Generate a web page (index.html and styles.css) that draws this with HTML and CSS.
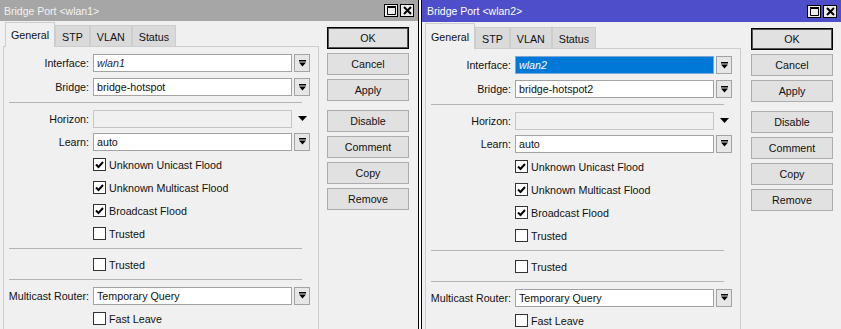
FILE: index.html
```html
<!DOCTYPE html>
<html lang="en">
<head>
  <meta charset="UTF-8" />
  <title>Bridge Port</title>
  <link rel="stylesheet" href="styles.css">
</head>
<body>
  <div class="desk">

    <!-- WINDOW: wlan1 (inactive) -->
    <section class="win win-left">
      <div class="titlebar">
        <span>Bridge Port &lt;wlan1&gt;</span>
        <div class="title-btns">
          <span class="tbtn"><svg width="9" height="9" viewBox="0 0 9 9"><path d="M0.5 1.5h8v7h-8z" fill="none" stroke="#000"/><path d="M0 0.5h9" stroke="#000" stroke-width="2"/></svg></span>
          <span class="tbtn"><svg width="9" height="9" viewBox="0 0 9 9"><path d="M1 1l7 7M8 1l-7 7" stroke="#000" stroke-width="2"/></svg></span>
        </div>
      </div>
      <div class="win-body">
        <div class="tabs-area">
          <div class="tabs">
            <span class="tab active">General</span>
            <span class="tab">STP</span>
            <span class="tab">VLAN</span>
            <span class="tab">Status</span>
          </div>
          <div class="panel">
            <div class="row row-top"><span class="lbl">Interface:</span><span class="field ital">wlan1</span><span class="drop"><svg width="7" height="7" viewBox="0 0 7 7"><path d="M0 0h7v1.5H0zM0 2.5h7L3.5 6.5z"/></svg></span></div>
            <div class="row row-top"><span class="lbl">Bridge:</span><span class="field">bridge-hotspot</span><span class="drop"><svg width="7" height="7" viewBox="0 0 7 7"><path d="M0 0h7v1.5H0zM0 2.5h7L3.5 6.5z"/></svg></span></div>
            <div class="sep"></div>
            <div class="row"><span class="lbl">Horizon:</span><span class="field off"></span><svg class="arrow" width="9" height="5" viewBox="0 0 9 5"><path d="M0 0h9L4.5 5z"/></svg></div>
            <div class="row"><span class="lbl">Learn:</span><span class="field">auto</span><span class="drop"><svg width="7" height="7" viewBox="0 0 7 7"><path d="M0 0h7v1.5H0zM0 2.5h7L3.5 6.5z"/></svg></span></div>
            <div class="row"><span class="lbl"></span><span class="check on"><svg width="11" height="11" viewBox="0 0 11 11"><path d="M2 5.5l2.5 2.5 4.5-5" fill="none" stroke="#000" stroke-width="2"/></svg></span>Unknown Unicast Flood</div>
            <div class="row"><span class="lbl"></span><span class="check on"><svg width="11" height="11" viewBox="0 0 11 11"><path d="M2 5.5l2.5 2.5 4.5-5" fill="none" stroke="#000" stroke-width="2"/></svg></span>Unknown Multicast Flood</div>
            <div class="row"><span class="lbl"></span><span class="check on"><svg width="11" height="11" viewBox="0 0 11 11"><path d="M2 5.5l2.5 2.5 4.5-5" fill="none" stroke="#000" stroke-width="2"/></svg></span>Broadcast Flood</div>
            <div class="row"><span class="lbl"></span><span class="check"></span>Trusted</div>
            <div class="sep"></div>
            <div class="row"><span class="lbl"></span><span class="check"></span>Trusted</div>
            <div class="sep"></div>
            <div class="row"><span class="lbl">Multicast Router:</span><span class="field">Temporary Query</span><span class="drop"><svg width="7" height="7" viewBox="0 0 7 7"><path d="M0 0h7v1.5H0zM0 2.5h7L3.5 6.5z"/></svg></span></div>
            <div class="row"><span class="lbl"></span><span class="check"></span>Fast Leave</div>
          </div>
        </div>
        <div class="btns">
          <span class="btn btn-ok">OK</span>
          <span class="btn">Cancel</span>
          <span class="btn">Apply</span>
          <span class="btn btn-gap">Disable</span>
          <span class="btn">Comment</span>
          <span class="btn">Copy</span>
          <span class="btn">Remove</span>
        </div>
      </div>
    </section>

    <div class="divider"></div>

    <!-- WINDOW: wlan2 (active) -->
    <section class="win win-right">
      <div class="titlebar">
        <span>Bridge Port &lt;wlan2&gt;</span>
        <div class="title-btns">
          <span class="tbtn"><svg width="9" height="9" viewBox="0 0 9 9"><path d="M0.5 1.5h8v7h-8z" fill="none" stroke="#000"/><path d="M0 0.5h9" stroke="#000" stroke-width="2"/></svg></span>
          <span class="tbtn"><svg width="9" height="9" viewBox="0 0 9 9"><path d="M1 1l7 7M8 1l-7 7" stroke="#000" stroke-width="2"/></svg></span>
        </div>
      </div>
      <div class="win-body">
        <div class="tabs-area">
          <div class="tabs">
            <span class="tab active">General</span>
            <span class="tab">STP</span>
            <span class="tab">VLAN</span>
            <span class="tab">Status</span>
          </div>
          <div class="panel">
            <div class="row row-top"><span class="lbl">Interface:</span><span class="field ital sel">wlan2</span><span class="drop"><svg width="7" height="7" viewBox="0 0 7 7"><path d="M0 0h7v1.5H0zM0 2.5h7L3.5 6.5z"/></svg></span></div>
            <div class="row row-top"><span class="lbl">Bridge:</span><span class="field">bridge-hotspot2</span><span class="drop"><svg width="7" height="7" viewBox="0 0 7 7"><path d="M0 0h7v1.5H0zM0 2.5h7L3.5 6.5z"/></svg></span></div>
            <div class="sep"></div>
            <div class="row"><span class="lbl">Horizon:</span><span class="field off"></span><svg class="arrow" width="9" height="5" viewBox="0 0 9 5"><path d="M0 0h9L4.5 5z"/></svg></div>
            <div class="row"><span class="lbl">Learn:</span><span class="field">auto</span><span class="drop"><svg width="7" height="7" viewBox="0 0 7 7"><path d="M0 0h7v1.5H0zM0 2.5h7L3.5 6.5z"/></svg></span></div>
            <div class="row"><span class="lbl"></span><span class="check on"><svg width="11" height="11" viewBox="0 0 11 11"><path d="M2 5.5l2.5 2.5 4.5-5" fill="none" stroke="#000" stroke-width="2"/></svg></span>Unknown Unicast Flood</div>
            <div class="row"><span class="lbl"></span><span class="check on"><svg width="11" height="11" viewBox="0 0 11 11"><path d="M2 5.5l2.5 2.5 4.5-5" fill="none" stroke="#000" stroke-width="2"/></svg></span>Unknown Multicast Flood</div>
            <div class="row"><span class="lbl"></span><span class="check on"><svg width="11" height="11" viewBox="0 0 11 11"><path d="M2 5.5l2.5 2.5 4.5-5" fill="none" stroke="#000" stroke-width="2"/></svg></span>Broadcast Flood</div>
            <div class="row"><span class="lbl"></span><span class="check"></span>Trusted</div>
            <div class="sep"></div>
            <div class="row"><span class="lbl"></span><span class="check"></span>Trusted</div>
            <div class="sep"></div>
            <div class="row"><span class="lbl">Multicast Router:</span><span class="field">Temporary Query</span><span class="drop"><svg width="7" height="7" viewBox="0 0 7 7"><path d="M0 0h7v1.5H0zM0 2.5h7L3.5 6.5z"/></svg></span></div>
            <div class="row"><span class="lbl"></span><span class="check"></span>Fast Leave</div>
          </div>
        </div>
        <div class="btns">
          <span class="btn btn-ok">OK</span>
          <span class="btn">Cancel</span>
          <span class="btn">Apply</span>
          <span class="btn btn-gap">Disable</span>
          <span class="btn">Comment</span>
          <span class="btn">Copy</span>
          <span class="btn">Remove</span>
        </div>
      </div>
    </section>

  </div>
</body>
</html>
```

FILE: styles.css
```css
* {
  box-sizing: border-box;
}
body {
  margin: 0;
  background-color: #f0f0f0;
  font-family: 'Liberation Sans', Arial, sans-serif;
  font-size: 10.7px;
  color: #111;
}
.desk {
  display: flex;
  width: 841px;
  height: 329px;
  overflow: hidden;
}

/* windows */
.win {
  display: flex;
  flex-direction: column;
  background-color: #f0f0f0;
}
.win-left {
  width: 418px;
}
.win-right {
  flex: 1;
}
.divider {
  width: 4px;
  background-color: #fff;
  border-left: 1px solid #000;
  border-right: 1px solid #000;
}

.titlebar {
  flex-shrink: 0;
  height: 21px;
  display: flex;
  align-items: center;
  justify-content: space-between;
  padding: 0 4px 0 4px;
  background-color: #a6a6a6;
  color: #f2f2f2;
  font-size: 10.5px;
}
.win-right .titlebar {
  height: 22px;
  padding-left: 5px;
  background-color: #4e4ecb;
  color: #fff;
}
.title-btns {
  display: flex;
  gap: 2px;
}
.tbtn {
  width: 14px;
  height: 13px;
  border: 1px solid #000;
  background-color: #ececec;
  display: flex;
  align-items: center;
  justify-content: center;
}

.win-body {
  flex: 1;
  display: flex;
  align-items: flex-start;
}

/* tabs */
.tabs-area {
  margin-left: 3px;
  width: 316px;
}
.tabs {
  display: flex;
  align-items: flex-end;
  height: 25px;
  padding-left: 2px;
}
.win-right .tabs {
  height: 26px;
  padding-left: 0;
}
.tab {
  height: 21px;
  padding: 2px 6px 0;
  border: 1px solid #cdcdcd;
  border-bottom: 0;
  background-color: #dadada;
  display: flex;
  align-items: center;
}
.tab.active {
  position: relative;
  z-index: 1;
  height: 25px;
  margin-bottom: -1px;
  padding: 0 5px;
  background-color: #f0f0f0;
}
.win-right .tab.active {
  height: 26px;
}

.panel {
  border: 1px solid #cdcdcd;
  border-bottom: 0;
  padding: 4px 8px 0 0;
  height: 300px;
}

/* form rows */
.row {
  display: flex;
  align-items: center;
  height: 23px;
}
.row-top {
  height: 24px;
}
.lbl {
  flex-shrink: 0;
  width: 86px;
  padding-right: 1px;
  text-align: right;
  white-space: nowrap;
}
.field {
  width: 199px;
  height: 18px;
  margin-left: 3px;
  padding: 0 3px;
  border: 1px solid #a3a3a3;
  background-color: #fff;
  display: flex;
  align-items: center;
  white-space: nowrap;
}
.field.ital {
  font-style: italic;
  color: #1e1e55;
}
.field.sel {
  background-color: #0078d7;
  border-color: #7aa7d6;
  color: #fff;
}
.field.off {
  background-color: #f0f0f0;
  border-color: #c6c6c6;
}
.drop {
  width: 16px;
  height: 18px;
  margin-left: 2px;
  border: 1px solid #a3a3a3;
  background-color: #e6e6e6;
  display: flex;
  align-items: center;
  justify-content: center;
}
.arrow {
  margin-left: 6px;
}
.check {
  width: 13px;
  height: 13px;
  margin: 0 3px 0 3px;
  border: 1px solid #333;
  background-color: #fff;
  display: flex;
  align-items: center;
  justify-content: center;
}
.sep {
  height: 1px;
  margin: 3px 8px 4px 5px;
  background-color: #b4b4b4;
}

/* side buttons */
.btns {
  width: 82px;
  margin: 6px 0 0 8px;
  display: flex;
  flex-direction: column;
  gap: 4px;
}
.win-right .btns {
  margin-left: 10px;
}
.btn {
  height: 22px;
  border: 1px solid #adadad;
  background-color: #e1e1e1;
  display: flex;
  align-items: center;
  justify-content: center;
}
.btn-ok {
  border-color: #000;
  box-shadow: inset 0 0 0 1px #555;
}
.btn-gap {
  margin-top: 5px;
}
```
